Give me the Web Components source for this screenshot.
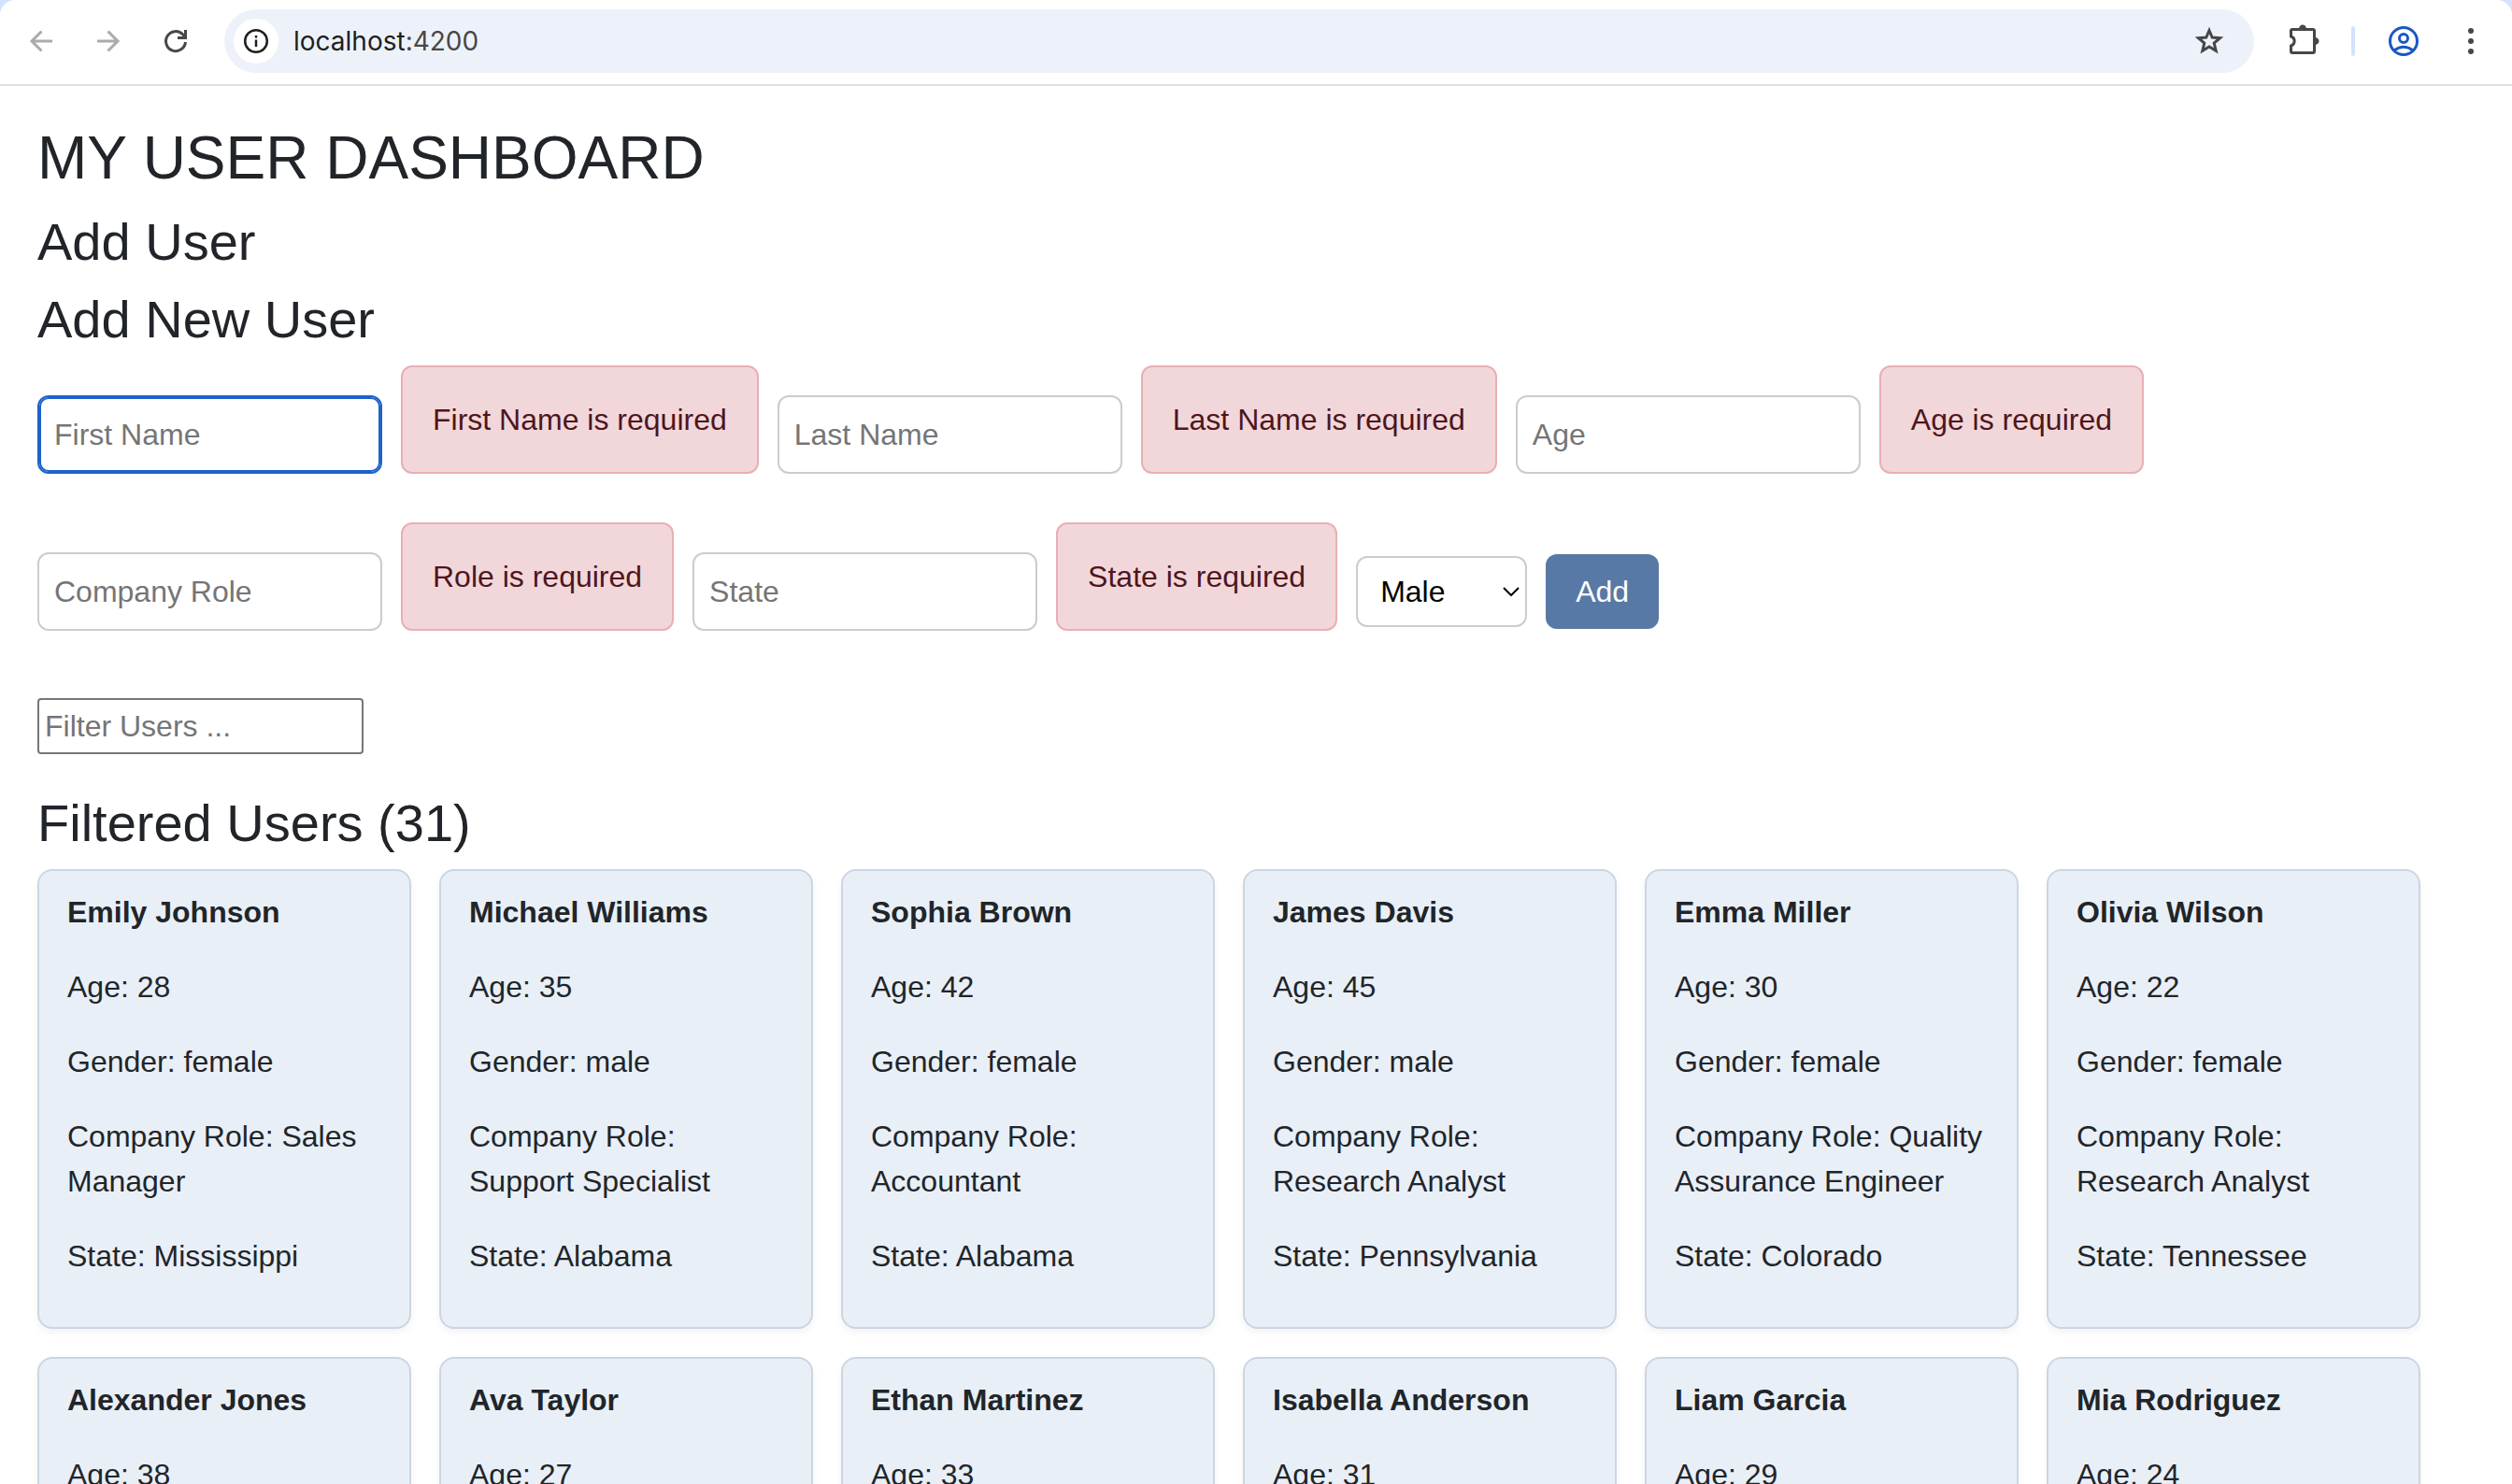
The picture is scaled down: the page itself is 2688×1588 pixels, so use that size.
<!DOCTYPE html>
<html lang="en">
<head>
<meta charset="utf-8">
<title>User Dashboard</title>
<style>
  body { margin: 0; background: #fff; color: #212529; font: 32px/48px "Liberation Sans", Arial, sans-serif; }
</style>
</head>
<body>
<browser-window>
  <browser-toolbar slot="toolbar" host="localhost" port=":4200"></browser-toolbar>
  <user-dashboard></user-dashboard>
</browser-window>

<script>
const define = (name, html, setup) => {
  const template = document.createElement('template');
  template.innerHTML = html;
  customElements.define(name, class extends HTMLElement {
    constructor() {
      super();
      this.attachShadow({ mode: 'open' });
    }
    connectedCallback() {
      if (this.shadowRoot.childNodes.length) return;
      this.shadowRoot.append(template.content.cloneNode(true));
      if (setup) setup(this, this.shadowRoot);
    }
  });
};

define('browser-window', `
  <style>
    :host { display: flex; flex-direction: column; height: 100vh; overflow: hidden; }
    header { flex: none; background: #d3e3fd; }
    main { flex: 1; min-height: 0; overflow: hidden; }
  </style>
  <header><slot name="toolbar"></slot></header>
  <main><slot></slot></main>`);

define('browser-toolbar', `
  <style>
    :host { display: flex; align-items: center; padding: 10px 32px 12px; background: #fff;
      border-bottom: 2px solid #e1e2e2; border-radius: 16px 16px 0 0; color: #474747; }
    nav { display: flex; gap: 48px; margin-right: 40px; }
    .tools { display: flex; align-items: center; gap: 36px; margin-left: 36px; }
    button { all: unset; display: flex; }
    button:disabled { color: #ababab; }
    svg { display: block; overflow: visible; fill: none; stroke: currentColor; stroke-width: 3; }
    .address { flex: 1; display: flex; align-items: center; height: 68px; box-sizing: border-box;
      padding: 0 32px 0 10px; border-radius: 34px; background: #edf2fa; }
    .info { justify-content: center; align-items: center; width: 48px; height: 48px; border-radius: 50%;
      background: #fff; color: #1f1f1f; margin-right: 16px; }
    .info svg { stroke-width: 2.500; }
    .url { flex: 1; font: 28px/34px Inter, sans-serif; color: #474747; }
    .url b { font-weight: 400; color: #1f1f1f; }
    .divider { width: 4px; height: 32px; border-radius: 2px; background: #d3e3fd; }
    .profile { color: #1a56c4; }
  </style>
  <nav>
    <button aria-label="Back" disabled><svg width="24" height="24"><path d="M24 12H2M12.500 1.500 2 12l10.500 10.500"/></svg></button>
    <button aria-label="Forward" disabled><svg width="24" height="24"><path d="M0 12h22M11.500 1.500 22 12 11.500 22.500"/></svg></button>
    <button aria-label="Reload"><svg width="24" height="24"><path d="M22.500 13A10.500 10.500 0 1 1 19.500 4.700L22 7.300M22.500 0V8.500H14"/></svg></button>
  </nav>
  <div class="address">
    <button class="info" aria-label="Site information"><svg width="28" height="28"><circle cx="14" cy="14" r="11.800"/><path d="M14 12.500v7.500M14 8v2.500"/></svg></button>
    <span class="url"><b></b><span></span></span>
    <button aria-label="Bookmark"><svg width="32" height="32"><path d="M16 4.500 19.200 12 27.600 12.700 21.200 18.100 23.200 26.300 16 22 8.800 26.300 10.800 18.100 4.400 12.700 12.800 12Z"/></svg></button>
  </div>
  <div class="tools">
    <button aria-label="Extensions"><svg width="32" height="32"><path d="M5 3.500H27Q28.500 3.500 28.500 5V27Q28.500 28.500 27 28.500H5Q3.500 28.500 3.500 27V21C8.400 19.500 8.400 12.500 3.500 11V5Q3.500 3.500 5 3.500Z"/><path d="M12 3a4 4.500 0 0 1 8 0ZM29 12a4.500 4 0 0 1 0 8Z" fill="currentColor" stroke="none"/></svg></button>
    <span class="divider"></span>
    <button class="profile" aria-label="Profile"><svg width="32" height="32"><circle cx="16" cy="16" r="14.500"/><circle cx="16" cy="13" r="4.500"/><path d="M6 26Q16 18.500 26 26"/></svg></button>
    <button aria-label="Menu"><svg width="32" height="32"><g fill="currentColor" stroke="none"><circle cx="20" cy="5" r="3"/><circle cx="20" cy="16" r="3"/><circle cx="20" cy="27" r="3"/></g></svg></button>
  </div>`, (el, root) => {
  root.querySelector('.url b').textContent = el.getAttribute('host');
  root.querySelector('.url span').textContent = el.getAttribute('port');
});

define('text-field', `
  <style>
    :host { display: block; }
    input { display: block; box-sizing: border-box; width: 369px; height: 84px; padding: 16px; margin: 0;
      border: 2px solid #ccc; border-radius: 12px; background: #fff; color: #212529;
      font: inherit; outline: none; }
    input::placeholder { color: #757575; opacity: 1; }
    :host([active]) input { border-color: #1f62c9; box-shadow: inset 0 0 0 2px #1f62c9; }
    :host([plain]) input { width: 349px; height: 60px; padding: 4px 6px; border-color: #767676; border-radius: 4px; }
  </style>
  <input type="text">`, (el, root) => {
  const input = root.querySelector('input');
  input.placeholder = el.getAttribute('label');
  input.setAttribute('aria-label', el.getAttribute('label'));
});

define('field-alert', `
  <style>
    :host { display: block; padding: 32px; border: 2px solid #e8afb5; border-radius: 12px;
      background: #f2d7da; color: #4f151c; white-space: nowrap; }
  </style>
  <slot></slot>`);

define('gender-select', `
  <style>
    :host { display: grid; align-items: center; }
    select { grid-area: 1 / 1; appearance: none; box-sizing: border-box; width: 183px; height: 76px; margin: 0;
      padding: 0 24px; border: 2px solid #ccc; border-radius: 12px; background: #fff; color: #000; font: inherit; }
    svg { grid-area: 1 / 1; justify-self: end; margin-right: 8px; pointer-events: none; }
  </style>
  <select aria-label="Gender"><option>Male</option><option>Female</option></select>
  <svg width="18" height="10" fill="none" stroke="#000" stroke-width="2"><path d="M1 1 9 9 17 1"/></svg>`);

define('user-form', `
  <style>
    :host { display: block; }
    form { display: flex; flex-wrap: wrap; align-items: flex-end; gap: 52px 20px; }
    .actions { display: flex; align-items: center; gap: 20px; height: 84px; }
    button { height: 80px; padding: 0 32px; border: 0; border-radius: 12px; background: #5879a5; color: #fff; font: inherit; }
  </style>
  <form>
    <text-field label="First Name" active></text-field><field-alert>First Name is required</field-alert>
    <text-field label="Last Name"></text-field><field-alert>Last Name is required</field-alert>
    <text-field label="Age"></text-field><field-alert>Age is required</field-alert>
    <text-field label="Company Role"></text-field><field-alert>Role is required</field-alert>
    <text-field label="State"></text-field><field-alert>State is required</field-alert>
    <div class="actions"><gender-select></gender-select><button type="button">Add</button></div>
  </form>`);

define('user-card', `
  <style>
    :host { display: block; box-sizing: border-box; min-height: 492px; padding: 20px 30px; border: 2px solid #ccd6e2;
      border-radius: 16px; background: #e9eff7; box-shadow: 0 4px 8px rgba(0, 0, 0, .05); }
    p { margin: 0 0 32px; }
  </style>
  <p><strong><slot></slot></strong></p>`, (el, root) => {
  for (const [label, value] of Object.entries(el.details)) {
    const p = document.createElement('p');
    p.textContent = label + ': ' + value;
    root.append(p);
  }
});

const users = [
  ['Emily Johnson', 28, 'female', 'Sales Manager', 'Mississippi'],
  ['Michael Williams', 35, 'male', 'Support Specialist', 'Alabama'],
  ['Sophia Brown', 42, 'female', 'Accountant', 'Alabama'],
  ['James Davis', 45, 'male', 'Research Analyst', 'Pennsylvania'],
  ['Emma Miller', 30, 'female', 'Quality Assurance Engineer', 'Colorado'],
  ['Olivia Wilson', 22, 'female', 'Research Analyst', 'Tennessee'],
  ['Alexander Jones', 38], ['Ava Taylor', 27], ['Ethan Martinez', 33],
  ['Isabella Anderson', 31], ['Liam Garcia', 29], ['Mia Rodriguez', 24]
];

define('user-list', `
  <style>
    :host { display: grid; grid-template-columns: repeat(auto-fill, 400px); gap: 30px; }
  </style>`, (el, root) => {
  for (const [name, age, gender, role, state] of users) {
    const card = document.createElement('user-card');
    card.textContent = name;
    card.details = { Age: age };
    if (gender) Object.assign(card.details, { Gender: gender, 'Company Role': role, State: state });
    root.append(card);
  }
});

define('user-dashboard', `
  <style>
    :host { display: block; padding: 38px 40px 40px; }
    h1, h2 { margin: 0 0 16px; font-weight: 400; }
    h1 { font-size: 64px; line-height: 79px; }
    h2 { font-size: 56px; line-height: 67px; }
    .filter { margin: 72px 0 40px; }
  </style>
  <h1>MY USER DASHBOARD</h1>
  <h2>Add User</h2>
  <h2>Add New User</h2>
  <user-form></user-form>
  <text-field class="filter" label="Filter Users ..." plain></text-field>
  <h2>Filtered Users (31)</h2>
  <user-list></user-list>`);
</script>
</body>
</html>
